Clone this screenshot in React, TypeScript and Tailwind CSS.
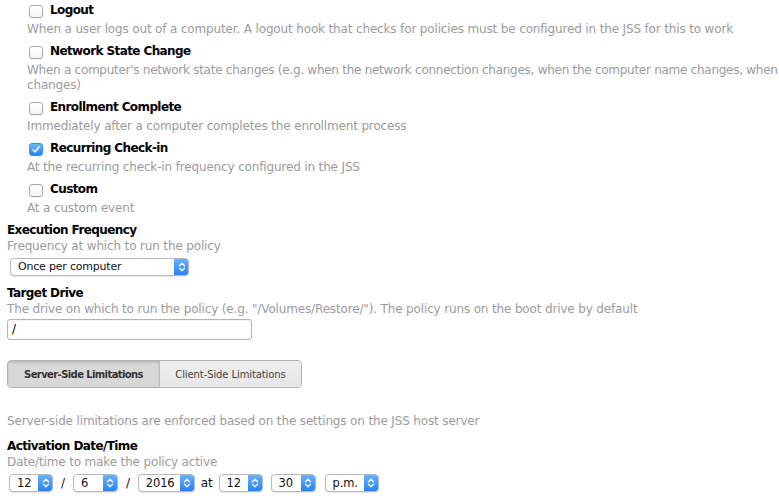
import React from "react";

function Chevrons() {
  return (
    <svg width="8" height="12" viewBox="0 0 8 12" fill="none">
      <path d="M1.5 4.8 L4 2.3 L6.5 4.8" stroke="white" strokeWidth="1.3" strokeLinecap="round" strokeLinejoin="round" />
      <path d="M1.5 7.2 L4 9.7 L6.5 7.2" stroke="white" strokeWidth="1.3" strokeLinecap="round" strokeLinejoin="round" />
    </svg>
  );
}

function Sel({ className, text, textClass }: { className: string; text: string; textClass: string }) {
  return (
    <div className={"flex h-[18px] rounded-[4px] border border-[#b9b9b9] bg-white shadow-[0_1px_1px_rgba(0,0,0,0.1)] overflow-hidden " + className}>
      <div className={"flex-1 pl-[7px] leading-[16px] text-[#111] whitespace-nowrap " + textClass}>{text}</div>
      <div className="w-[15px] -my-px -mr-px flex items-center justify-center rounded-r-[4px] bg-gradient-to-b from-[#6cb4fc] to-[#1b7ff6]">
        <Chevrons />
      </div>
    </div>
  );
}

function Check({ checked }: { checked?: boolean }) {
  if (checked) {
    return (
      <div className="ml-[2px] mt-[3px] w-[14px] h-[13px] rounded-[3px] bg-gradient-to-b from-[#6db4fc] to-[#2284f6] border border-[#3a8ef0] flex items-center justify-center">
        <svg width="10" height="9" viewBox="0 0 10 9" fill="none">
          <path d="M2 4.8 L4 7 L8 1.8" stroke="white" strokeWidth="1.5" strokeLinecap="round" strokeLinejoin="round" />
        </svg>
      </div>
    );
  }
  return (
    <div className="ml-[2px] mt-[3px] w-[14px] h-[13px] rounded-[3px] bg-gradient-to-b from-white to-[#f4f4f4] border border-[#a9a9a9] shadow-[0_1px_0_rgba(0,0,0,0.05)]" />
  );
}

function Item({ label, desc, checked }: { label: string; desc: React.ReactNode; checked?: boolean }) {
  return (
    <div className="mb-[3px]">
      <div className="flex items-center h-[21px]">
        <Check checked={checked} />
        <span className="ml-[7px] font-bold text-[12px] tracking-[-0.6px] text-black">{label}</span>
      </div>
      <div className="mt-[2px] leading-[15px] text-[#9b9b9b] whitespace-nowrap">{desc}</div>
    </div>
  );
}

export default function App() {
  return (
    <div className="w-[779px] h-[500px] overflow-hidden bg-white text-[12px] tracking-[-0.15px] font-['Lucida_Grande','DejaVu_Sans',sans-serif]">
      <div className="-mt-[1px] pl-[27px]">
        <Item label="Logout" desc="When a user logs out of a computer. A logout hook that checks for policies must be configured in the JSS for this to work" />
        <Item
          label="Network State Change"
          desc={
            <>
              <span className="tracking-[-0.27px]">
                When a computer's network state changes (e.g. when the network connection changes, when the computer name changes, when
              </span>
              <br />
              changes)
            </>
          }
        />
        <Item label="Enrollment Complete" desc="Immediately after a computer completes the enrollment process" />
        <Item label="Recurring Check-in" checked desc="At the recurring check-in frequency configured in the JSS" />
        <Item label="Custom" desc="At a custom event" />
      </div>

      <div className="pl-[7px] mt-[6px]">
        <div className="font-bold text-[12px] tracking-[-0.6px] leading-[16px] text-black">Execution Frequency</div>
        <div className="leading-[16px] text-[#9b9b9b]">Frequency at which to run the policy</div>
        <div className="mt-[4px] ml-[3px]">
          <Sel className="w-[179px]" textClass="text-[11px] tracking-[-0.2px]" text="Once per computer" />
        </div>

        <div className="mt-[9px] font-bold text-[12px] tracking-[-0.6px] leading-[16px] text-black">Target Drive</div>
        <div className="leading-[16px] text-[#9b9b9b] whitespace-nowrap">
          The drive on which to run the policy (e.g. "/Volumes/Restore/"). The policy runs on the boot drive by default
        </div>
        <div className="mt-[2px] w-[245px] h-[21px] rounded-[3px] border border-[#b3b3b3] bg-white pl-[4px] text-[12px] leading-[19px] text-black shadow-[inset_0_1px_1px_rgba(0,0,0,0.06)]">
          /
        </div>

        <div className="mt-[20px] flex w-[295px] h-[28px] rounded-[4px] border border-[#b1b1b1] overflow-hidden text-[10px]">
          <div className="w-[152px] flex items-center justify-center font-bold tracking-[-0.6px] text-[#333] bg-[#d8d8d8] border-r border-[#bdbdbd] shadow-[inset_0_2px_2px_rgba(0,0,0,0.12)]">
            Server-Side Limitations
          </div>
          <div className="flex-1 flex items-center justify-center tracking-[-0.1px] text-[#444] bg-gradient-to-b from-[#efefef] to-[#e6e6e6]">
            Client-Side Limitations
          </div>
        </div>

        <div className="mt-[25px] leading-[16px] text-[#9b9b9b]">
          Server-side limitations are enforced based on the settings on the JSS host server
        </div>

        <div className="mt-[9px] font-bold text-[12px] tracking-[-0.6px] leading-[16px] text-black">Activation Date/Time</div>
        <div className="leading-[16px] text-[#9b9b9b]">Date/time to make the policy active</div>
        <div className="mt-[4px] ml-[2px] flex items-center text-[12px] text-[#111]">
          <Sel className="w-[44px]" textClass="text-[11.5px]" text="12" />
          <span className="mx-[8px]">/</span>
          <Sel className="w-[45px]" textClass="text-[11.5px]" text="6" />
          <span className="mx-[8px]">/</span>
          <Sel className="w-[57px]" textClass="text-[11.5px]" text="2016" />
          <span className="mx-[6px]">at</span>
          <Sel className="w-[44px]" textClass="text-[11.5px]" text="12" />
          <div className="w-[8px]" />
          <Sel className="w-[45px]" textClass="text-[11.5px]" text="30" />
          <div className="w-[9px]" />
          <Sel className="w-[54px]" textClass="text-[11.5px]" text="p.m." />
        </div>
      </div>
    </div>
  );
}
